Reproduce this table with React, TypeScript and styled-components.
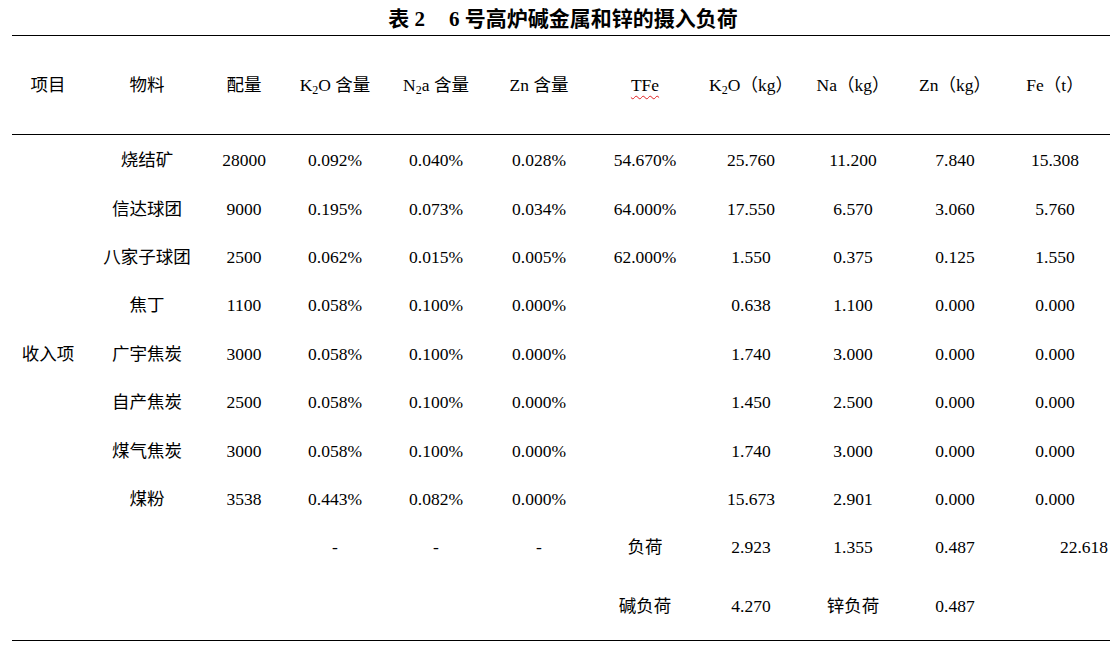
import React from 'react';
import styled, { createGlobalStyle } from 'styled-components';

const GlobalStyle = createGlobalStyle`
  html, body {
    margin: 0;
    padding: 0;
    background: #ffffff;
  }
  body {
    font-family: "Liberation Serif", "Noto Sans CJK SC", serif;
    color: #000000;
  }
`;

const Page = styled.div`
  width: 1118px;
  height: 649px;
  background: #ffffff;
  overflow: hidden;
`;

const Title = styled.div`
  height: 35px;
  display: flex;
  align-items: center;
  justify-content: center;
  padding-left: 8px;
  font-size: 21px;
  font-weight: bold;
  white-space: pre;
  box-sizing: border-box;
  padding-bottom: 1px;
`;

const TitleGap = styled.span`
  display: inline-block;
  width: 24px;
`;

const Table = styled.div`
  margin-left: 12px;
  width: 1098px;
  border-top: 1px solid #000;
  border-bottom: 1px solid #000;
`;

const COLS = '86px 98px 96px 86px 116px 90px 122px 90px 114px 90px 110px';

const Row = styled.div<{ $h: number; $line?: boolean }>`
  display: grid;
  grid-template-columns: ${COLS};
  height: ${(p) => p.$h}px;
  align-items: center;
  border-bottom: ${(p) => (p.$line ? '1px solid #000' : 'none')};
  box-sizing: border-box;
`;

const Cell = styled.div<{ $align?: 'center' | 'right'; $first?: boolean }>`
  font-size: 17.5px;
  line-height: 22px;
  text-align: ${(p) => p.$align || 'center'};
  padding-right: ${(p) => (p.$first ? '14px' : p.$align === 'right' ? '2px' : '0')};
  white-space: nowrap;
`;

const Sub = styled.sub`
  font-size: 12px;
  vertical-align: -3px;
  line-height: 0;
`;

const Squiggle = styled.span`
  text-decoration: underline wavy #e02020;
  text-decoration-thickness: 1px;
  text-underline-offset: 4px;
`;

const header: React.ReactNode[] = [
  '项目',
  '物料',
  '配量',
  <>K<Sub>2</Sub>O 含量</>,
  <>N<Sub>2</Sub>a 含量</>,
  'Zn 含量',
  <Squiggle>TFe</Squiggle>,
  <>K<Sub>2</Sub>O（kg）</>,
  'Na（kg）',
  'Zn（kg）',
  'Fe（t）',
];

const rows: string[][] = [
  ['', '烧结矿', '28000', '0.092%', '0.040%', '0.028%', '54.670%', '25.760', '11.200', '7.840', '15.308'],
  ['', '信达球团', '9000', '0.195%', '0.073%', '0.034%', '64.000%', '17.550', '6.570', '3.060', '5.760'],
  ['', '八家子球团', '2500', '0.062%', '0.015%', '0.005%', '62.000%', '1.550', '0.375', '0.125', '1.550'],
  ['', '焦丁', '1100', '0.058%', '0.100%', '0.000%', '', '0.638', '1.100', '0.000', '0.000'],
  ['收入项', '广宇焦炭', '3000', '0.058%', '0.100%', '0.000%', '', '1.740', '3.000', '0.000', '0.000'],
  ['', '自产焦炭', '2500', '0.058%', '0.100%', '0.000%', '', '1.450', '2.500', '0.000', '0.000'],
  ['', '煤气焦炭', '3000', '0.058%', '0.100%', '0.000%', '', '1.740', '3.000', '0.000', '0.000'],
  ['', '煤粉', '3538', '0.443%', '0.082%', '0.000%', '', '15.673', '2.901', '0.000', '0.000'],
];

const loadRow = ['', '', '', '-', '-', '-', '负荷', '2.923', '1.355', '0.487', '22.618'];
const totalRow = ['', '', '', '', '', '', '碱负荷', '4.270', '锌负荷', '0.487', ''];

export default function App() {
  return (
    <Page>
      <GlobalStyle />
      <Title>
        表 2<TitleGap />6 号高炉碱金属和锌的摄入负荷
      </Title>
      <Table>
        <Row $h={99} $line>
          {header.map((h, i) => (
            <Cell key={i} $first={i === 0}>{h}</Cell>
          ))}
        </Row>
        <div style={{ height: 1 }} />
        {rows.map((r, ri) => (
          <Row key={ri} $h={48.4}>
            {r.map((v, i) => (
              <Cell key={i} $first={i === 0}>{v}</Cell>
            ))}
          </Row>
        ))}
        <Row $h={48.4}>
          {loadRow.map((v, i) => (
            <Cell key={i} $first={i === 0} $align={i === 10 ? 'right' : 'center'}>{v}</Cell>
          ))}
        </Row>
        <Row $h={68}>
          {totalRow.map((v, i) => (
            <Cell key={i} $first={i === 0}>{v}</Cell>
          ))}
        </Row>
      </Table>
    </Page>
  );
}
